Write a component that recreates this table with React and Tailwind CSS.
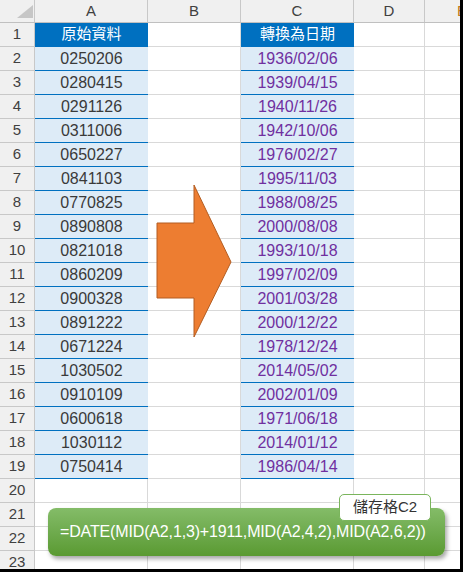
const source = [
  '0250206', '0280415', '0291126', '0311006', '0650227', '0841103', '0770825', '0890808', '0821018',
  '0860209', '0900328', '0891222', '0671224', '1030502', '0910109', '0600618', '1030112', '0750414',
];

const dates = [
  '1936/02/06', '1939/04/15', '1940/11/26', '1942/10/06', '1976/02/27', '1995/11/03', '1988/08/25',
  '2000/08/08', '1993/10/18', '1997/02/09', '2001/03/28', '2000/12/22', '1978/12/24', '2014/05/02',
  '2002/01/09', '1971/06/18', '2014/01/12', '1986/04/14',
];

const font = { fontFamily: '"Liberation Sans", "Noto Sans CJK TC", sans-serif' };

const HeaderCell = ({ width, children }) => (
  <div className={`${width} shrink-0 h-full flex items-center justify-center border-r border-[#c8c8c8] text-[15px] text-[#404040]`}>
    {children}
  </div>
);

const Row = ({ n }) => {
  const isHead = n === 1;
  const inTable = n >= 2 && n <= 19;
  const a = inTable ? source[n - 2] : null;
  const c = inTable ? dates[n - 2] : null;

  const tableCell = isHead
    ? 'bg-[#0070c0] text-white border-b border-[#0070c0]'
    : inTable
      ? 'bg-[#ddebf7] border-b border-[#0070c0]'
      : 'border-b border-r border-[#d9d9d9]';

  return (
    <div className="flex h-[24px]">
      <div className="w-[35px] h-full flex items-center justify-center bg-[#f0f0f0] border-r border-b border-[#c8c8c8] text-[15px] text-[#404040]">
        {n}
      </div>
      <div className={`w-[113px] h-full flex items-center justify-center text-[16px] text-[#3a3a3a] ${tableCell}`}>
        {isHead ? <span className="text-[15px]">原始資料</span> : a}
      </div>
      <div className="w-[93px] h-full border-r border-b border-[#d9d9d9]" />
      <div className={`w-[113px] h-full flex items-center justify-center text-[16px] text-[#7030a0] ${tableCell}`}>
        {isHead ? <span className="text-[15px] text-white">轉換為日期</span> : c}
      </div>
      <div className="w-[71px] h-full border-r border-b border-[#d9d9d9]" />
      <div className="flex-1 h-full border-b border-[#d9d9d9]" />
    </div>
  );
};

export default function App() {
  const rows = Array.from({ length: 23 }, (_, i) => i + 1);

  return (
    <div className="w-[463px] h-[572px] overflow-hidden bg-white border-r-[3px] border-b-[3px] border-black relative" style={font}>
      <div className="flex h-[23px] bg-[#f0f0f0] border-b border-[#c0c0c0]">
        <div className="w-[35px] shrink-0 h-full border-r border-[#c8c8c8] relative">
          <svg className="absolute left-0 top-0" width="35" height="22">
            <polygon points="33,5 33,18 17,18" fill="#c6c6c6" />
          </svg>
        </div>
        <HeaderCell width="w-[113px]">A</HeaderCell>
        <HeaderCell width="w-[93px]">B</HeaderCell>
        <HeaderCell width="w-[113px]">C</HeaderCell>
        <HeaderCell width="w-[71px]">D</HeaderCell>
        <div className="w-[74px] shrink-0 h-full flex items-center justify-center text-[15px] text-[#c07a20]">E</div>
      </div>
      {rows.map((n) => (
        <Row key={n} n={n} />
      ))}

      {/* big arrow */}
      <svg className="absolute left-[150px] top-[180px]" width="90" height="165">
        <polygon
          points="7,43 44,43 44,5 81,82 44,157 44,118 7,118"
          fill="#ed7d31"
          stroke="#b35d22"
          strokeWidth="1"
        />
      </svg>

      {/* formula callout */}
      <div className="absolute left-[48px] top-[508px] w-[397px] h-[48px] rounded-[8px] bg-linear-to-b from-[#84bc68] to-[#5a9a31] shadow-[2px_3px_4px_rgba(0,0,0,0.35)] flex items-center pl-[12px] text-white text-[16px] tracking-[-0.15px]">
        =DATE(MID(A2,1,3)+1911,MID(A2,4,2),MID(A2,6,2))
      </div>
      <div className="absolute left-[339px] top-[494px] w-[92px] h-[27px] rounded-[5px] border border-[#7ab55c] bg-white flex items-center justify-center text-[15px] text-[#333]">
        儲存格C2
      </div>
    </div>
  );
}
